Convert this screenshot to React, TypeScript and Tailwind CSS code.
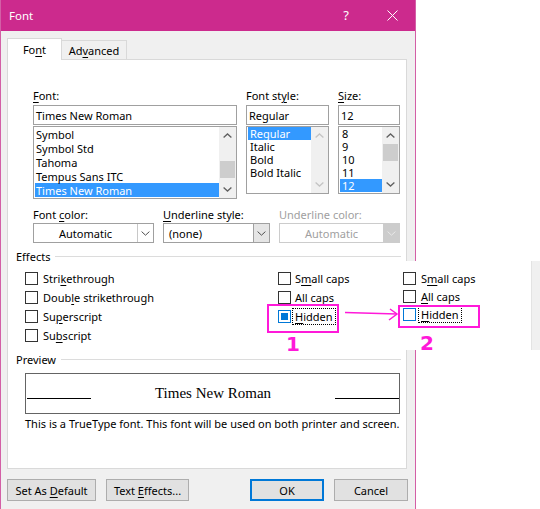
import React from "react";

// access-key underline
function U({ children }: { children: React.ReactNode }) {
  return <span className="underline underline-offset-2">{children}</span>;
}

function Chevron({ dir, color }: { dir: "up" | "down"; color: string }) {
  return (
    <svg width="9" height="5" viewBox="0 0 9 5" fill="none">
      <path
        d={dir === "up" ? "M0.6 4.4 L4.5 0.9 L8.4 4.4" : "M0.6 0.6 L4.5 4.1 L8.4 0.6"}
        stroke={color}
        strokeWidth="1.3"
      />
    </svg>
  );
}

function ScrollBar({ thumb, disabled }: { thumb?: string; disabled?: boolean }) {
  const c = disabled ? "#c4c4c4" : "#606060";
  return (
    <div className="w-[17px] h-full bg-[#f0f0f0] flex flex-col shrink-0">
      <div className="h-[17px] flex items-center justify-center">
        <Chevron dir="up" color={c} />
      </div>
      <div className="flex-1">
        {thumb && <div className={`ml-px w-[15px] h-[17px] bg-[#cdcdcd] ${thumb}`} />}
      </div>
      <div className="h-[17px] flex items-center justify-center">
        <Chevron dir="down" color={c} />
      </div>
    </div>
  );
}

function ListItem({ text, sel, cls }: { text: string; sel?: boolean; cls: string }) {
  return (
    <div className={`${cls} leading-[13px] flex items-center ${sel ? "bg-[#3399ff] text-white" : ""}`}>
      {text}
    </div>
  );
}

function Box({ kind }: { kind?: "mixed" | "focus" }) {
  if (kind === "mixed")
    return (
      <div className="w-[13px] h-[13px] border border-[#0078d7] flex items-center justify-center shrink-0">
        <div className="w-[7px] h-[7px] bg-[#0078d7]" />
      </div>
    );
  if (kind === "focus")
    return <div className="w-[13px] h-[13px] border border-[#0078d7] shrink-0" />;
  return <div className="w-[13px] h-[13px] border border-[#333333] shrink-0" />;
}

function Combo({
  text,
  w,
  center,
  disabled,
  pressed,
}: {
  text: string;
  w: string;
  center?: boolean;
  disabled?: boolean;
  pressed?: boolean;
}) {
  return (
    <div
      className={`${w} h-[20px] flex border ${
        disabled ? "border-[#cccccc] text-[#a0a0a0]" : "border-[#a0a0a0]"
      } bg-white`}
    >
      <div className={`flex-1 flex items-center ${center ? "justify-center" : "pl-[5px]"}`}>{text}</div>
      <div
        className={`w-[16px] flex items-center justify-center border-l ${
          disabled
            ? "bg-[#cccccc] border-[#cccccc]"
            : pressed
            ? "bg-[#e5e5e5] border-[#a0a0a0]"
            : "bg-white border-[#c8c8c8]"
        }`}
      >
        <svg width="9" height="5" viewBox="0 0 9 5" fill="none">
          <path d="M0.6 0.6 L4.5 4.2 L8.4 0.6" stroke={disabled ? "#e8e8e8" : "#505050"} strokeWidth="1" />
        </svg>
      </div>
    </div>
  );
}

function Btn({ w, children, def }: { w: string; children: React.ReactNode; def?: boolean }) {
  return (
    <div
      className={`${w} h-[22px] flex items-center justify-center bg-[#e1e1e1] ${
        def ? "border-2 border-[#0078d7]" : "border border-[#adadad]"
      }`}
    >
      <span>{children}</span>
    </div>
  );
}

export default function App() {
  return (
    <div className="relative w-[540px] h-[509px] bg-white overflow-hidden font-['Noto_Sans',sans-serif] text-[11px] text-black leading-[15px]">
      {/* dialog */}
      <div className="w-[416px] h-[509px] bg-[#f0f0f0] border-x border-[#d35fa6] flex flex-col">
        <div className="h-[31px] bg-[#cc2a8d] flex items-center text-white shrink-0">
          <span className="pl-[8px] text-[11.5px]">Font</span>
          <div className="ml-auto w-[46px] h-full flex items-center justify-center text-[13px]">?</div>
          <div className="w-[46px] h-full flex items-center justify-center">
            <svg width="11" height="11" viewBox="0 0 11 11">
              <path d="M0.5 0.5 L10.5 10.5 M10.5 0.5 L0.5 10.5" stroke="white" strokeWidth="1" />
            </svg>
          </div>
        </div>

        {/* tabs */}
        <div className="flex items-end h-[21px] mt-[7px] ml-[6px]">
          <div className="relative z-10 w-[55px] h-[22px] -mb-px bg-white border border-b-0 border-[#d9d9d9] flex items-center justify-center">
            <span>
              Fo<U>n</U>t
            </span>
          </div>
          <div className="w-[65px] h-[19px] border-t border-r border-[#d9d9d9] flex items-center justify-center">
            <span>
              Ad<U>v</U>anced
            </span>
          </div>
        </div>

        {/* tab panel */}
        <div className="w-[400px] h-[410px] ml-[6px] bg-white border border-[#d9d9d9] flex flex-col shrink-0">
          <div className="flex gap-[9px] pl-[25px] pt-[28px]">
            <div className="w-[204px] flex flex-col">
              <div className="h-[15px]">
                <U>F</U>ont:
              </div>
              <div className="mt-[2px] h-[20px] border border-[#a0a0a0] flex items-center pl-[2px]">
                Times New Roman
              </div>
              <div className="mt-px h-[73px] border border-[#a0a0a0] flex">
                <div className="flex-1 pl-px">
                  {["Symbol", "Symbol Std", "Tahoma", "Tempus Sans ITC"].map((t) => (
                    <ListItem key={t} text={t} cls="h-[14px] pl-px" />
                  ))}
                  <ListItem text="Times New Roman" sel cls="h-[14px] pl-px" />
                </div>
                <ScrollBar thumb="mt-[17px]" />
              </div>
            </div>
            <div className="w-[83px] flex flex-col">
              <div className="h-[15px]">
                Font st<U>y</U>le:
              </div>
              <div className="mt-[2px] h-[20px] border border-[#a0a0a0] flex items-center pl-[2px]">Regular</div>
              <div className="mt-px h-[68px] border border-[#a0a0a0] flex">
                <div className="flex-1 pl-px">
                  <ListItem text="Regular" sel cls="h-[13px] pl-[2px]" />
                  {["Italic", "Bold", "Bold Italic"].map((t) => (
                    <ListItem key={t} text={t} cls="h-[13px] pl-[2px]" />
                  ))}
                </div>
                <ScrollBar disabled />
              </div>
            </div>
            <div className="w-[62px] flex flex-col">
              <div className="h-[15px]">
                <U>S</U>ize:
              </div>
              <div className="mt-[2px] h-[20px] border border-[#a0a0a0] flex items-center pl-[2px]">12</div>
              <div className="mt-px h-[68px] border border-[#a0a0a0] flex">
                <div className="flex-1 pl-px">
                  {["8", "9", "10", "11"].map((t) => (
                    <ListItem key={t} text={t} cls="h-[13px] pl-[2px]" />
                  ))}
                  <ListItem text="12" sel cls="h-[13px] pl-[2px]" />
                </div>
                <ScrollBar thumb="mt-0" />
              </div>
            </div>
          </div>

          {/* color / underline row */}
          <div className="flex gap-[9px] pl-[25px] mt-[8px]">
            <div className="flex flex-col">
              <div className="h-[15px]">
                Font <U>c</U>olor:
              </div>
              <div className="mt-px">
                <Combo text="Automatic" w="w-[121px]" center />
              </div>
            </div>
            <div className="flex flex-col">
              <div className="h-[15px]">
                <U>U</U>nderline style:
              </div>
              <div className="mt-px">
                <Combo text="(none)" w="w-[107px]" pressed />
              </div>
            </div>
            <div className="flex flex-col text-[#a0a0a0]">
              <div className="h-[15px]">Underline color:</div>
              <div className="mt-px">
                <Combo text="Automatic" w="w-[121px]" center disabled />
              </div>
            </div>
          </div>

          {/* effects */}
          <div className="flex items-center h-[15px] mt-[6px] pl-[8px] pr-[5px]">
            <span>Effects</span>
            <div className="flex-1 h-px bg-[#dcdcdc] ml-[5px]" />
          </div>
          <div className="flex pl-[17px] mt-[5px]">
            <div className="w-[253px] flex flex-col">
              <div className="h-[19px] flex items-center gap-[5px]">
                <Box />
                <span>
                  Stri<U>k</U>ethrough
                </span>
              </div>
              <div className="h-[19px] flex items-center gap-[5px]">
                <Box />
                <span>
                  Doub<U>l</U>e strikethrough
                </span>
              </div>
              <div className="h-[19px] flex items-center gap-[5px]">
                <Box />
                <span>
                  Su<U>p</U>erscript
                </span>
              </div>
              <div className="h-[19px] flex items-center gap-[5px]">
                <Box />
                <span>
                  Su<U>b</U>script
                </span>
              </div>
            </div>
            <div className="flex flex-col">
              <div className="h-[19px] flex items-center gap-[4px]">
                <Box />
                <span>
                  S<U>m</U>all caps
                </span>
              </div>
              <div className="h-[19px] flex items-center gap-[4px]">
                <Box />
                <span>
                  <U>A</U>ll caps
                </span>
              </div>
              <div className="h-[19px] flex items-center gap-[1px]">
                <Box kind="mixed" />
                <span className="h-[17px] flex items-center px-[2px] border border-dotted border-black">
                  <span>
                    <U>H</U>idden
                  </span>
                </span>
              </div>
            </div>
          </div>

          {/* preview */}
          <div className="flex items-center h-[15px] mt-[7px] pl-[8px] pr-[5px]">
            <span>Preview</span>
            <div className="flex-1 h-px bg-[#dcdcdc] ml-[5px]" />
          </div>
          <div className="ml-[17px] mt-[6px] w-[375px] h-[41px] border border-[#646464] flex items-center justify-between pl-px">
            <div className="w-[64px] h-px bg-black translate-y-[5px]" />
            <span className="font-['Liberation_Serif',serif] text-[15px]">Times New Roman</span>
            <div className="w-[64px] h-px bg-black translate-y-[5px]" />
          </div>
          <div className="pl-[17px] mt-[2px]">
            This is a TrueType font. This font will be used on both printer and screen.
          </div>
        </div>

        {/* buttons */}
        <div className="flex mt-[10px] ml-[6px]">
          <Btn w="w-[89px]">
            Set As <U>D</U>efault
          </Btn>
          <div className="ml-[10px]">
            <Btn w="w-[83px]">
              Text <U>E</U>ffects...
            </Btn>
          </div>
          <div className="ml-[61px]">
            <Btn w="w-[74px]" def>
              OK
            </Btn>
          </div>
          <div className="ml-[10px]">
            <Btn w="w-[74px]">Cancel</Btn>
          </div>
        </div>
      </div>

      {/* annotation 1 */}
      <div className="absolute left-[267px] top-[304px] w-[72px] h-[29px] border-2 border-[#ff19d9]" />
      <div className="absolute left-[286px] top-[333px] font-['DejaVu_Sans',sans-serif] font-bold text-[20px] leading-[22px] text-[#ff19d9]">
        1
      </div>
      <svg className="absolute left-[340px] top-[304px]" width="62" height="20" viewBox="0 0 62 20" fill="none">
        <path d="M5 8.5 L57 10" stroke="#ff19d9" strokeWidth="1.5" />
        <path d="M50 5 L57 10 L49 16" stroke="#ff19d9" strokeWidth="1.5" />
      </svg>

      {/* pasted second state */}
      <div className="absolute left-[401px] top-[261px] w-[139px] h-[89px] bg-white flex">
        <div className="flex-1 flex flex-col pl-[2px] pt-[8px]">
          <div className="h-[18px] flex items-center gap-[5px]">
            <Box />
            <span>
              S<U>m</U>all caps
            </span>
          </div>
          <div className="h-[18px] flex items-center gap-[5px]">
            <Box />
            <span>
              <U>A</U>ll caps
            </span>
          </div>
          <div className="h-[18px] flex items-center gap-[2px]">
            <Box kind="focus" />
            <span className="h-[17px] flex items-center px-[2px] border border-dotted border-black">
              <span>
                <U>H</U>idden
              </span>
            </span>
          </div>
        </div>
        <div className="w-[9px] h-full bg-[#f0f0f0] border-l border-[#e3e3e3]" />
      </div>
      <div className="absolute left-[398px] top-[305px] w-[82px] h-[23px] border-2 border-[#ff19d9]" />
      <div className="absolute left-[420px] top-[332px] font-['DejaVu_Sans',sans-serif] font-bold text-[20px] leading-[22px] text-[#ff19d9]">
        2
      </div>
    </div>
  );
}
